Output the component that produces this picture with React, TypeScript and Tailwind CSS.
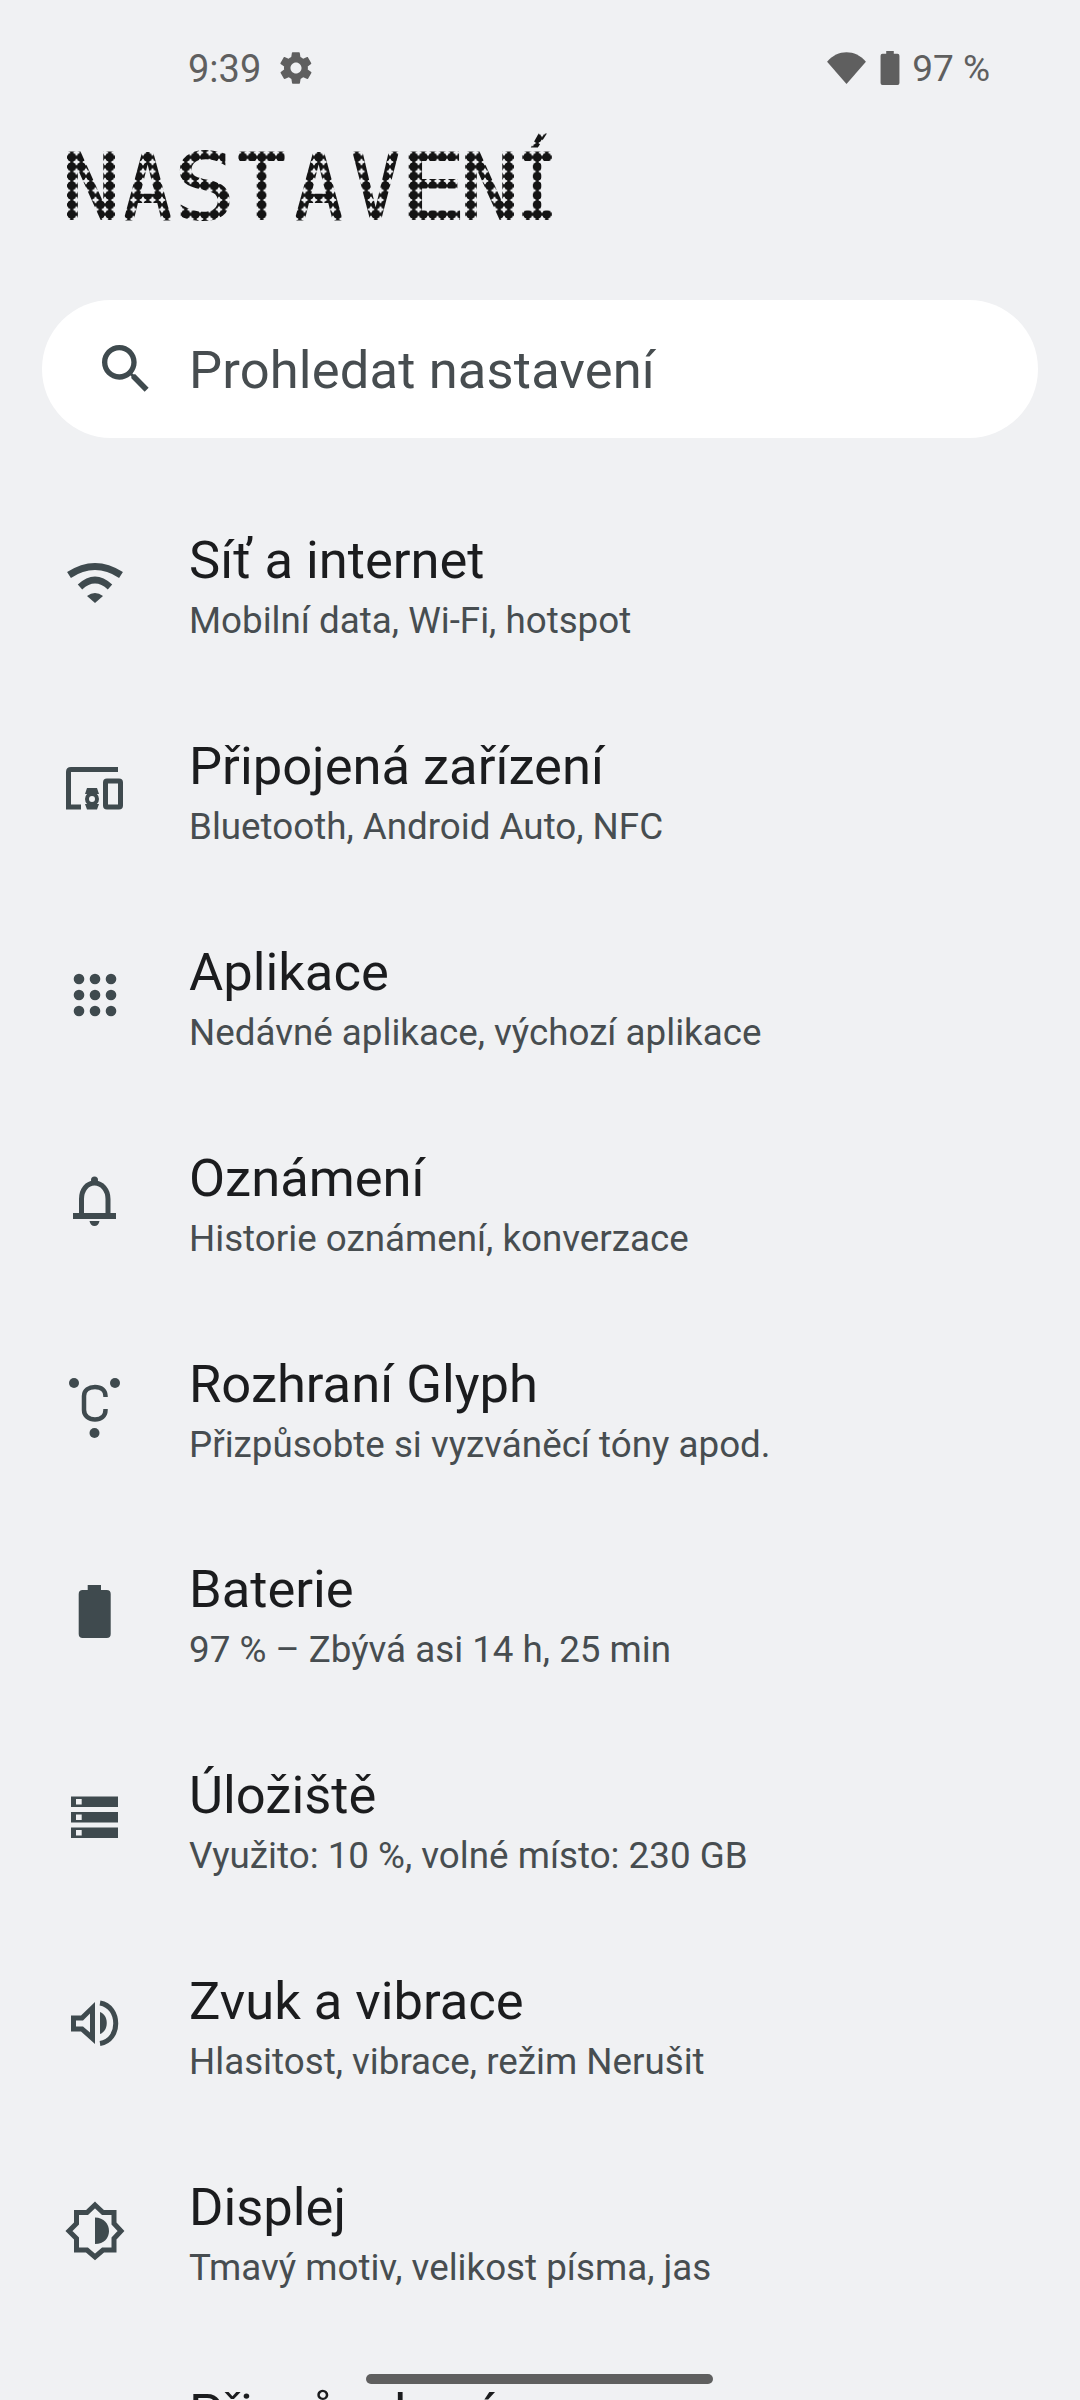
import React from "react";

const items = [
  { title: "Síť a internet", sub: "Mobilní data, Wi-Fi, hotspot", icon: "wifi" },
  { title: "Připojená zařízení", sub: "Bluetooth, Android Auto, NFC", icon: "devices" },
  { title: "Aplikace", sub: "Nedávné aplikace, výchozí aplikace", icon: "apps" },
  { title: "Oznámení", sub: "Historie oznámení, konverzace", icon: "bell" },
  { title: "Rozhraní Glyph", sub: "Přizpůsobte si vyzváněcí tóny apod.", icon: "glyph" },
  { title: "Baterie", sub: "97 % – Zbývá asi 14 h, 25 min", icon: "battery" },
  { title: "Úložiště", sub: "Využito: 10 %, volné místo: 230 GB", icon: "storage" },
  { title: "Zvuk a vibrace", sub: "Hlasitost, vibrace, režim Nerušit", icon: "sound" },
  { title: "Displej", sub: "Tmavý motiv, velikost písma, jas", icon: "display" },
  { title: "Přizpůsobení", sub: "", icon: "none" },
];

// each letter is stretched so its stems land on the dot columns
const titleLetters = [
  { char: "N", cls: "w-[50px] mr-[7px] -translate-x-[6.4px] scale-x-[1.11]" },
  { char: "A", cls: "w-[55px] mr-[2px] -translate-x-[0.8px] scale-x-[0.9]" },
  { char: "S", cls: "w-[50px] mr-[7px] -translate-x-[7px] scale-x-[1.13]" },
  { char: "T", cls: "w-[55px] mr-[2px] -translate-x-[0.4px] scale-x-[0.886]" },
  { char: "A", cls: "w-[55px] mr-[2px] -translate-x-[0.8px] scale-x-[0.9]" },
  { char: "V", cls: "w-[55px] mr-[2px] -translate-x-[0.8px] scale-x-[0.9]" },
  { char: "E", cls: "w-[46px] mr-[11px] -translate-x-[9.7px] scale-x-[1.23]" },
  { char: "N", cls: "w-[50px] mr-[7px] -translate-x-[6.4px] scale-x-[1.11]" },
  { char: "Í", cls: "w-[30px] -translate-x-[6.8px] scale-x-[0.77]" },
];

const RowIcon = ({ name }: { name: string }) => {
  const cls = "w-[64px] h-[64px] text-[#3f4a4e]";
  if (name === "wifi")
    return (
      <svg viewBox="0 0 64 64" className={cls} fill="none" stroke="currentColor">
        <path d="M6 24 Q32 7 58 24" strokeWidth="7" />
        <path d="M17 36 Q32 22 47 36" strokeWidth="6.500" />
        <path d="M24 45 Q32 39 40 45 L32 52 Z" fill="currentColor" strokeWidth="0" />
      </svg>
    );
  if (name === "devices")
    return (
      <svg viewBox="0 0 64 64" className={cls} fill="none" stroke="currentColor" strokeWidth="5">
        <path d="M55 12.500 H8 Q5.500 12.500 5.500 15 V50 H18" />
        <rect x="42.500" y="24" width="15" height="26" rx="1.500" />
        <circle cx="29" cy="42" r="5" strokeWidth="4" />
        <path d="M24 31 H34 L36 37 H22 Z M24 52.500 H34 L36 47 H22 Z" fill="currentColor" strokeWidth="0" />
      </svg>
    );
  if (name === "apps")
    return (
      <svg viewBox="0 0 64 64" className={cls} fill="currentColor">
        {[16, 32, 48].map((y) =>
          [16, 32, 48].map((x) => <circle key={`${x}-${y}`} cx={x} cy={y} r="5.300" />)
        )}
      </svg>
    );
  if (name === "bell")
    return (
      <svg viewBox="0 0 64 64" className={cls} fill="none" stroke="currentColor" strokeWidth="5">
        <path d="M18.500 47 V30 C18.500 21 24 14 31.500 14 C39 14 45 21 45 30 V47" />
        <path d="M10 47 H53" strokeWidth="6" />
        <circle cx="31.500" cy="11" r="3.500" fill="currentColor" strokeWidth="0" />
        <path d="M26.500 52 H36.500 Q35.500 57 31.500 57 Q27.500 57 26.500 52 Z" fill="currentColor" strokeWidth="0" />
      </svg>
    );
  if (name === "glyph")
    return (
      <svg viewBox="0 0 64 64" className={cls} fill="none" stroke="currentColor" strokeWidth="4.500">
        <circle cx="11" cy="8" r="5" fill="currentColor" strokeWidth="0" />
        <circle cx="52" cy="8" r="5" fill="currentColor" strokeWidth="0" />
        <circle cx="31.500" cy="58" r="5" fill="currentColor" strokeWidth="0" />
        <path d="M42.500 22 V21 C42.500 15 38 12 32 12 C26 12 21 15 21 21 V35 C21 41 26 44.500 32 44.500 C38 44.500 42.500 41 42.500 35 V34" />
      </svg>
    );
  if (name === "battery")
    return (
      <svg viewBox="0 0 64 64" className={cls} fill="currentColor">
        <path d="M24.700 5 H38 V10 H43.700 Q47.700 10 47.700 14 V54 Q47.700 58 43.700 58 H19.700 Q15.700 58 15.700 54 V14 Q15.700 10 19.700 10 H24.700 Z" />
      </svg>
    );
  if (name === "storage")
    return (
      <svg viewBox="0 0 64 64" className={cls} fill="currentColor">
        {[10.500, 26, 41.500].map((y) => (
          <path
            key={y}
            fillRule="evenodd"
            d={`M8 ${y} H55 V${y + 10.500} H8 Z M13 ${y + 2.500} V${y + 8} H18.700 V${y + 2.500} Z`}
          />
        ))}
      </svg>
    );
  if (name === "sound")
    return (
      <svg viewBox="0 0 64 64" className={cls} fill="currentColor">
        <path
          fillRule="evenodd"
          d="M8 23.500 H18 L32 10 V52 L18 39.500 H8 Z M13 28.500 V34.500 H20 L27 40.500 V21.500 L20 28.500 Z"
        />
        <path d="M37 20 C46 23 46 39 37 42 Z" />
        <path d="M37 11 C58 14.500 58 48.500 37 51.500" fill="none" stroke="currentColor" strokeWidth="5" />
      </svg>
    );
  if (name === "display")
    return (
      <svg viewBox="0 0 64 64" className={cls} fill="none" stroke="currentColor" strokeWidth="5">
        <path d="M32 7 L40 14.500 H51 V25.500 L58 33 L51 40.500 V52 H40 L32 59 L24 52 H13.500 V40.500 L6 33 L13.500 25.500 V14.500 H24 Z" />
        <path d="M32 19.500 C41 19.500 46 26 46 33 C46 40 41 46 32 46 Z" fill="currentColor" strokeWidth="0" />
      </svg>
    );
  return <div className="w-[64px] h-[64px]" />;
};

const App = () => {
  return (
    <div className="w-[1080px] h-[2400px] bg-[#f0f1f3] overflow-hidden relative font-['Roboto',sans-serif]">
      <div className="h-[123.750px] pl-[188px] pr-[90px] pt-[45px] flex justify-between text-[#5f5f5f]">
        <div className="flex items-start gap-[16px] h-[48px]">
          <span className="text-[38px] leading-[48px]">9:39</span>
          <svg viewBox="0 0 24 24" className="w-[38px] h-[38px] mt-[4px]" fill="currentColor">
            <path d="M19.4 13c.1-.3.1-.7.1-1s0-.7-.1-1l2.100-1.600c.2-.2.2-.4.1-.6l-2-3.500c-.1-.2-.4-.3-.6-.2l-2.500 1c-.5-.4-1.100-.7-1.700-1l-.4-2.600c0-.2-.2-.4-.5-.4h-4c-.3 0-.5.2-.5.400l-.4 2.600c-.6.300-1.200.6-1.700 1l-2.500-1c-.2-.1-.5 0-.6.200l-2 3.500c-.1.2-.1.4.1.6L4.500 11c-.1.300-.1.700-.1 1s0 .7.100 1l-2.100 1.600c-.2.200-.2.400-.1.600l2 3.500c.1.200.4.300.6.200l2.500-1c.5.400 1.100.7 1.700 1l.4 2.600c0 .2.200.400.500.400h4c.3 0 .5-.2.500-.400l.4-2.600c.6-.3 1.200-.6 1.700-1l2.500 1c.2.100.5 0 .6-.2l2-3.500c.1-.2.100-.4-.1-.6L19.400 13zM12 15.500c-1.900 0-3.500-1.600-3.500-3.500s1.600-3.500 3.500-3.500 3.500 1.600 3.500 3.500-1.600 3.500-3.500 3.500z" />
          </svg>
        </div>
        <div className="flex items-start h-[48px]">
          <svg viewBox="0 0 40 34" className="w-[39px] h-[33px] mt-[6px]" fill="currentColor">
            <path d="M0 11 C11 -2 29 -2 40 11 L20 34 Z" />
          </svg>
          <svg viewBox="0 0 20 36" className="w-[20px] h-[34px] mt-[6px] ml-[14px]" fill="currentColor">
            <path d="M6 0 H14 V3 H18 Q20 3 20 5 V34 Q20 36 18 36 H2 Q0 36 0 34 V5 Q0 3 2 3 H6 Z" />
          </svg>
          <span className="text-[37px] leading-[48px] ml-[12px]">97 %</span>
        </div>
      </div>

      {/* real text, cut into dots by the mask */}
      <h1 className="h-[176.250px] pl-[67.250px]">
        <span className="block w-[540px] h-[127px] whitespace-nowrap text-[90px] leading-[127px] font-['DejaVu_Sans_Mono',monospace] text-[#141414] [-webkit-text-stroke:2px_#141414] [mask-image:radial-gradient(circle,black_4.4px,transparent_4.9px)] [mask-size:9.5px_9.5px]">
          {titleLetters.map((l, i) => (
            <span key={i} className={`inline-block origin-left ${l.cls}`}>
              {l.char}
            </span>
          ))}
        </span>
      </h1>

      <div className="mx-[42px] h-[138px] rounded-full bg-white flex items-center pl-[58px]">
        <svg viewBox="0 0 24 24" className="w-[64px] h-[64px] text-[#3f4a4e] -ml-[6px]" fill="currentColor">
          <path d="M15.500 14h-.790l-.280-.270C15.410 12.590 16 11.110 16 9.500 16 5.910 13.090 3 9.500 3S3 5.910 3 9.500 5.910 16 9.500 16c1.610 0 3.090-.590 4.230-1.570l.270.280v.790l5 4.990L20.490 19l-4.990-5zm-6 0C7.010 14 5 11.990 5 9.500S7.010 5 9.500 5 14 7.010 14 9.500 11.990 14 9.500 14z" />
        </svg>
        <span className="text-[52.500px] text-[#474d50] ml-[31px] mt-[3px] tracking-[0.15px]">Prohledat nastavení</span>
      </div>

      <div className="pt-[42px]">
        {items.map((item) => (
          <div key={item.title} className="h-[205.900px] flex items-center pl-[63px]">
            <RowIcon name={item.icon} />
            <div className="ml-[62px] mt-[6px]">
              <div className="text-[52.500px] leading-[70px] text-[#1b1c1e]">{item.title}</div>
              <div className="h-[52px] text-[36.750px] leading-[52px] text-[#474d50]">{item.sub}</div>
            </div>
          </div>
        ))}
      </div>

      <div className="absolute left-[366px] top-[2374px] w-[347px] h-[10px] rounded-full bg-[#5f5f5f]" />
    </div>
  );
};

export default App;
